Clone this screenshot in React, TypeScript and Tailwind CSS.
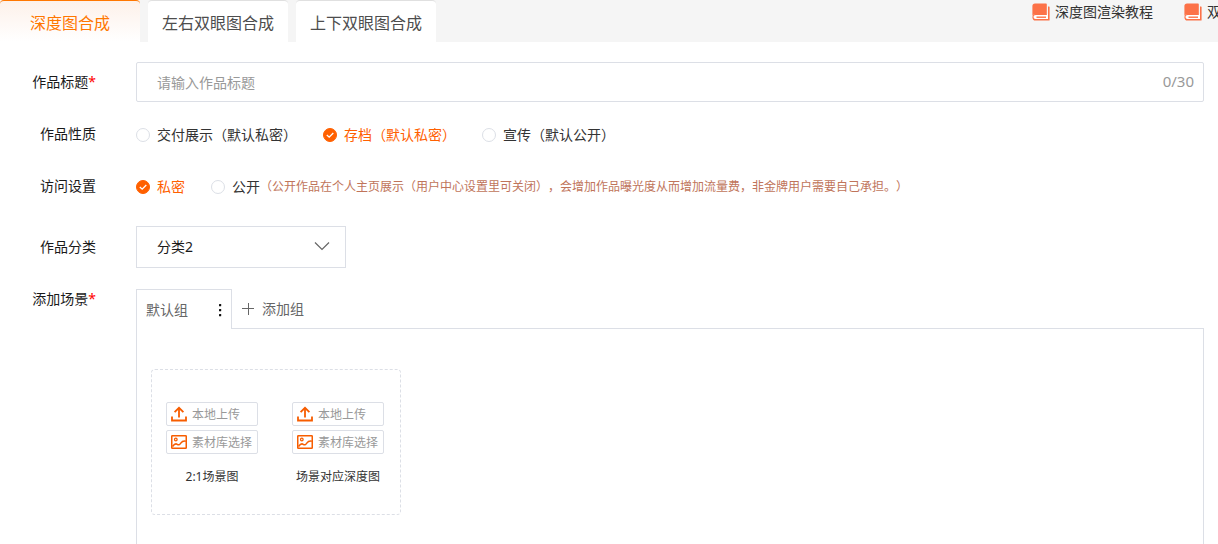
import { useState } from "react";
import type { ReactNode } from "react";

function BookIcon() {
  return (
    <svg width="18" height="18" viewBox="0 0 18 18" aria-hidden="true" className="shrink-0">
      <path d="M2 11H16V16.500H2z" fill="#fff" />
      <path d="M3 .4h10.800c.6 0 1 .4 1 1V11.200H3.400C2 11.200.9 12 .4 13V3C.4 1.400 1.400.4 3 .4z" fill="#fc7248" />
      <path d="M.4 14.200C.4 12.400 1.700 11 3.400 11H14.800v.900H3.800c-1.500 0-2.300.900-2.300 2.100s.9 2 2.100 2H16V3.600h1c.4 0 .6.2.6.5v12.900c0 .4-.2.6-.6.6H3.400C1.700 17.600.4 16.100.4 14.200z" fill="#fc7248" />
      <path d="M4.500 14.200h9.500" stroke="#fc7248" strokeWidth="1.400" />
    </svg>
  );
}

function UploadIcon() {
  return (
    <svg width="16" height="16" viewBox="0 0 16 16" fill="none" stroke="#f75d00" strokeWidth="1.800" aria-hidden="true" className="shrink-0">
      <path d="M1 10.500V14.500H15V10.500" />
      <path d="M8 11.500V2" />
      <path d="M3.600 6.200L8 1.800L12.400 6.200" />
    </svg>
  );
}

function PictureIcon() {
  return (
    <svg width="16" height="16" viewBox="0 0 16 16" fill="none" stroke="#f75d00" strokeWidth="1.500" aria-hidden="true" className="shrink-0">
      <rect x=".75" y="1.750" width="14.500" height="12.500" rx=".6" />
      <circle cx="4.800" cy="5.500" r="1.300" strokeWidth="1.300" />
      <path d="M1.500 12.500C3.300 10 4.800 9.300 6.200 10.300S8.600 11 9.800 9.200S12 6.800 14.800 7.200" />
    </svg>
  );
}

function Row({ label, htmlFor, required, children, className }: { label: string; htmlFor?: string; required?: boolean; children: ReactNode; className: string }) {
  const text = (
    <>
      {label}
      {required && <span className="text-[#ff0000]">*</span>}
    </>
  );
  return (
    <div className={`flex gap-10 ${className}`}>
      <div className="w-24 shrink-0 text-right leading-5 text-[#1a1a1a]">
        {htmlFor ? <label htmlFor={htmlFor}>{text}</label> : <span>{text}</span>}
      </div>
      {children}
    </div>
  );
}

function Radio({ name, label, checked, onChange }: { name: string; label: string; checked: boolean; onChange: () => void }) {
  return (
    <label className={`flex cursor-pointer items-center gap-[7px] whitespace-nowrap ${checked ? "text-[#ff6000]" : "text-[#333]"}`}>
      <span className="grid size-[14px] shrink-0 place-items-center">
        <input
          type="radio"
          name={name}
          checked={checked}
          onChange={onChange}
          className="col-start-1 row-start-1 size-[14px] appearance-none rounded-full border border-[#dcdfe6] bg-white checked:border-[#ff6000] checked:bg-[#ff6000]"
        />
        {checked && (
          <svg width="14" height="14" viewBox="0 0 14 14" fill="none" stroke="#fff" strokeWidth="1.300" className="pointer-events-none col-start-1 row-start-1">
            <path d="M3.800 7L6.200 9.200L10.300 5" />
          </svg>
        )}
      </span>
      {label}
    </label>
  );
}

function UploadColumn({ caption }: { caption: string }) {
  const button = "flex h-6 w-full items-center gap-[5px] rounded-[2px] border border-[#dcdfe6] bg-white pl-1 text-xs whitespace-nowrap text-[#999]";
  return (
    <div className="flex w-[92px] flex-col gap-1">
      <button type="button" className={button}>
        <UploadIcon />
        <span className="pt-0.5">本地上传</span>
      </button>
      <button type="button" className={button}>
        <PictureIcon />
        <span className="pt-0.5">素材库选择</span>
      </button>
      <div className="mt-[9px] text-center text-xs leading-5 whitespace-nowrap text-[#333]">{caption}</div>
    </div>
  );
}

const tabs = ["深度图合成", "左右双眼图合成", "上下双眼图合成"];
const natures = ["交付展示（默认私密）", "存档（默认私密）", "宣传（默认公开）"];

export default function App() {
  const [tab, setTab] = useState(0);
  const [title, setTitle] = useState("");
  const [nature, setNature] = useState(1);
  const [access, setAccess] = useState(0);

  return (
    <div className="flex min-h-screen flex-col bg-white font-['Noto_Sans','Noto_Sans_CJK_SC',sans-serif] text-sm [text-spacing-trim:space-all]">
      <header className="flex h-[42px] bg-[#f5f5f5]">
        <nav className="flex gap-2">
          {tabs.map((name, i) => (
            <button
              key={name}
              type="button"
              onClick={() => setTab(i)}
              className={`w-[140px] rounded-t border-t pt-0.5 text-base ${
                i === tab ? "border-[#ff7700] bg-linear-to-b from-[#fdf1ea] to-white text-[#ff7700]" : "border-[#e0e0e0] bg-white text-[#4d4d4d]"
              }`}
            >
              {name}
            </button>
          ))}
        </nav>
        <div className="ml-auto flex h-6 w-[186px] gap-[31px] overflow-hidden whitespace-nowrap text-[#333]">
          <a href="#depth" className="flex shrink-0 items-center gap-[5px]">
            <BookIcon />
            深度图渲染教程
          </a>
          <a href="#stereo" className="flex shrink-0 items-center gap-[5px]">
            <BookIcon />
            双眼图渲染教程
          </a>
        </div>
      </header>

      <main className="flex flex-1 flex-col pt-5 pr-[14px]">
        <Row label="作品标题" htmlFor="title" required className="h-10 items-center">
          <div className="flex h-full flex-1 items-center rounded-[2px] border border-[#dcdfe6] pr-[9px] pl-5">
            <input
              id="title"
              value={title}
              maxLength={30}
              onChange={(e) => setTitle(e.target.value)}
              placeholder="请输入作品标题"
              className="min-w-0 flex-1 pt-0.5 text-[#333] outline-none placeholder:text-[#999]"
            />
            <span className="text-[15px] text-[#999]">{title.length}/30</span>
          </div>
        </Row>

        <Row label="作品性质" className="mt-3 h-10 items-center">
          <div className="flex items-center gap-[26px] pt-0.5" role="radiogroup" aria-label="作品性质">
            {natures.map((n, i) => (
              <Radio key={n} name="nature" label={n} checked={nature === i} onChange={() => setNature(i)} />
            ))}
          </div>
        </Row>

        <Row label="访问设置" className="mt-3 h-10 items-center">
          <div className="flex items-center gap-[26px] pt-0.5" role="radiogroup" aria-label="访问设置">
            <Radio name="access" label="私密" checked={access === 0} onChange={() => setAccess(0)} />
            <div className="flex items-center">
              <Radio name="access" label="公开" checked={access === 1} onChange={() => setAccess(1)} />
              <span className="text-xs text-[#c0745a]">（公开作品在个人主页展示（用户中心设置里可关闭），会增加作品曝光度从而增加流量费，非金牌用户需要自己承担。）</span>
            </div>
          </div>
        </Row>

        <Row label="作品分类" htmlFor="category" className="mt-5 h-[42px] items-center">
          <div className="relative h-full w-[210px]">
            <select id="category" className="h-full w-full appearance-none border border-[#dcdfe6] bg-white pl-5 text-[#1a1a1a]">
              <option>分类2</option>
            </select>
            <svg width="16" height="10" viewBox="0 0 16 10" fill="none" stroke="#666" strokeWidth="1.200" className="pointer-events-none absolute top-4 right-4">
              <path d="M1 .500L8 7.500L15 .500" />
            </svg>
          </div>
        </Row>

        <Row label="添加场景" required className="mt-[21px] flex-1">
          <div className="flex flex-1 flex-col">
            <div className="flex h-10 text-[#666]">
              <div className="z-10 flex w-24 items-center justify-between border border-b-0 border-[#dcdfe6] bg-white px-[9px]">
                <button type="button">默认组</button>
                <button type="button" aria-label="更多">
                  <svg width="4" height="14" viewBox="0 0 4 14" fill="#111">
                    <rect x="1" y="1" width="2.200" height="2.200" rx=".5" />
                    <rect x="1" y="6" width="2.200" height="2.200" rx=".5" />
                    <rect x="1" y="11" width="2.200" height="2.200" rx=".5" />
                  </svg>
                </button>
              </div>
              <button type="button" className="flex items-center gap-2 pl-[10px]">
                <svg width="12" height="12" viewBox="0 0 12 12" stroke="#666" aria-hidden="true">
                  <path d="M0 5.500H12M6.500 0V12" />
                </svg>
                添加组
              </button>
            </div>
            <section className="-mt-px flex-1 border border-b-0 border-[#dcdfe6] px-[14px] pt-10">
              <div className="flex h-[146px] w-[250px] gap-[34px] rounded border border-dashed border-[#dcdfe6] px-[14px] pt-8">
                <UploadColumn caption="2:1场景图" />
                <UploadColumn caption="场景对应深度图" />
              </div>
            </section>
          </div>
        </Row>
      </main>
    </div>
  );
}
